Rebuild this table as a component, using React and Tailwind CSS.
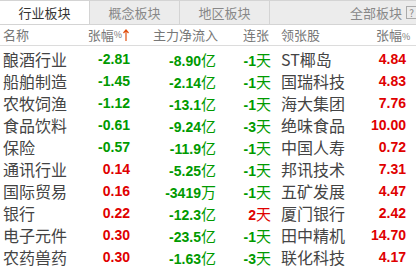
import React from "react";

const rows = [
  ["酿酒行业", "-2.81", "-8.90亿", "-1天", "ST椰岛", "4.84"],
  ["船舶制造", "-1.45", "-2.14亿", "-1天", "国瑞科技", "4.83"],
  ["农牧饲渔", "-1.12", "-13.1亿", "-1天", "海大集团", "7.76"],
  ["食品饮料", "-0.61", "-9.24亿", "-3天", "绝味食品", "10.00"],
  ["保险", "-0.57", "-11.9亿", "-1天", "中国人寿", "0.72"],
  ["通讯行业", "0.14", "-5.25亿", "-1天", "邦讯技术", "7.31"],
  ["国际贸易", "0.16", "-3419万", "-1天", "五矿发展", "4.47"],
  ["银行", "0.22", "-12.3亿", "2天", "厦门银行", "2.42"],
  ["电子元件", "0.30", "-23.5亿", "-1天", "田中精机", "14.70"],
  ["农药兽药", "0.30", "-1.63亿", "-3天", "联化科技", "4.17"],
];

const cjk = { fontFamily: '"Noto Sans CJK SC", "Noto Sans", sans-serif' };
const num = { fontFamily: '"Liberation Sans", Arial, sans-serif' };

function NumUnit({ value }) {
  const m = value.match(/^([-\d.]+)(.*)$/);
  const neg = value.startsWith("-");
  const color = neg ? "text-[#009a00]" : "text-[#e00000]";
  return (
    <span className={`inline-flex items-baseline ${color}`}>
      <span className="font-bold text-[14px]" style={num}>{m[1]}</span>
      <span className="text-[15px]" style={cjk}>{m[2]}</span>
    </span>
  );
}

export default function App() {
  return (
    <div className="w-[416px] h-[269px] bg-white overflow-hidden relative" style={cjk}>
      {/* tab bar */}
      <div className="flex h-[25px] border-t border-b border-[#d4d4d4] bg-[#ececec] text-[13px]">
        <div className="w-[90px] bg-white border-r border-[#d4d4d4] flex items-center justify-center text-[#333]">行业板块</div>
        <div className="w-[90px] border-r border-[#d4d4d4] flex items-center justify-center text-[#888]">概念板块</div>
        <div className="w-[90px] border-r border-[#d4d4d4] flex items-center justify-center text-[#888]">地区板块</div>
        <div className="flex-1 flex items-center justify-end text-[#888]">
          <span>全部板块</span>
          <span className="ml-[4px] mr-[-1px] w-[11px] h-[13px] border border-[#aaa] text-[10px] leading-[11px] flex items-center justify-center text-[#888]">?</span>
        </div>
      </div>
      {/* header */}
      <div className="flex items-center h-[21px] border-b border-[#dcdcdc] text-[13px] text-[#777] pl-[3px]">
        <div className="w-[80px]">名称</div>
        <div className="w-[47px] text-right flex items-center justify-end pr-[1px]">
          <span>张幅</span><span className="text-[9px]">%</span>
          <svg width="6" height="12" viewBox="0 0 6 12" className="ml-[1px]">
            <path d="M3 1 L3 12 M0.5 4 L3 1 L5.5 4" stroke="#e05010" strokeWidth="1.2" fill="none" />
          </svg>
        </div>
        <div className="w-[88px] text-right">主力净流入</div>
        <div className="w-[51px] text-right">连张</div>
        <div className="w-[12px]" />
        <div className="w-[95px]">领张股</div>
        <div className="w-[30px] text-right whitespace-nowrap"><span>张幅</span><span className="text-[9px]">%</span></div>
      </div>
      {/* rows */}
      <div className="pt-[2px]">
        {rows.map((r, i) => {
          const gain = r[1].startsWith("-") ? "text-[#009a00]" : "text-[#e00000]";
          const streakNeg = r[3].startsWith("-");
          return (
            <div key={i} className="flex items-center h-[22px] pl-[3px]">
              <div className="w-[80px] text-[16px] text-[#444] leading-none">{r[0]}</div>
              <div className={`w-[47px] text-right font-bold text-[14px] ${gain}`} style={num}>{r[1]}</div>
              <div className="w-[86px] text-right leading-none"><NumUnit value={r[2]} /></div>
              <div className="w-[55px] text-right leading-none"><NumUnit value={r[3]} /></div>
              <div className="w-[10px]" />
              <div className="w-[95px] text-[16px] text-[#444] leading-none">{r[4]}</div>
              <div className="w-[30px] text-right font-bold text-[14px] text-[#e00000] whitespace-nowrap flex justify-end" style={num}>{r[5]}</div>
            </div>
          );
        })}
      </div>
    </div>
  );
}
